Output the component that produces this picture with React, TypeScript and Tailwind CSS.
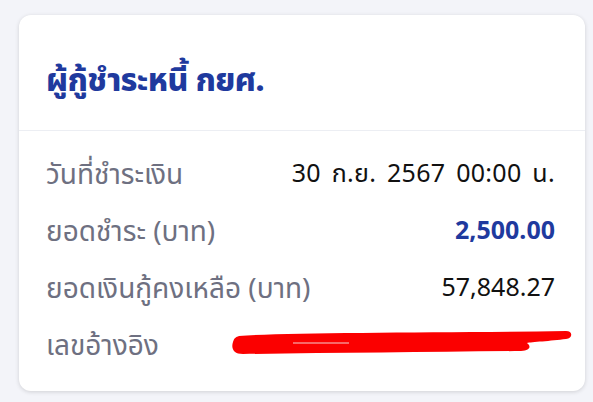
import React from "react";

const rows = [
  { label: "วันที่ชำระเงิน", value: "30 ก.ย. 2567 00:00 น.", cls: "text-[#111111] [word-spacing:4px] tracking-[0.3px]" },
  { label: "ยอดชำระ (บาท)", value: "2,500.00", cls: "text-[#1f3a9e] font-bold" },
  { label: "ยอดเงินกู้คงเหลือ (บาท)", value: "57,848.27", cls: "text-[#111111]" },
];

export default function App() {
  return (
    <div
      className="w-[593px] h-[402px] bg-[#f3f4f9] pt-[15px] pl-[19px] pr-[8px]"
      style={{ fontFamily: '"Noto Sans", "Noto Sans Thai", "Liberation Sans", sans-serif' }}
    >
      <div className="h-[376px] bg-white rounded-[12px] shadow-[0_1px_4px_rgba(0,0,0,0.15)] flex flex-col">
        <div className="h-[116px] flex items-center px-[27px] pt-[12px] border-b border-[#eceef3]">
          <h1 className="text-[32px] leading-none font-extrabold text-[#1f3a9e] tracking-[-0.6px]">ผู้กู้ชำระหนี้ กยศ.</h1>
        </div>
        <div className="flex flex-col pl-[27px] pr-[30px] pt-[13px]">
          {rows.map((r) => (
            <div key={r.label} className="h-[57px] flex items-center justify-between">
              <span className="text-[28px] leading-none text-[#6e7081]">{r.label}</span>
              <span className={"text-[25px] leading-none " + r.cls}>{r.value}</span>
            </div>
          ))}
          <div className="h-[57px] flex items-center justify-between relative">
            <span className="text-[28px] leading-none text-[#6e7081]">เลขอ้างอิง</span>
            <svg
              className="absolute left-[185px] top-[13px]"
              width="345"
              height="28"
              viewBox="0 0 345 28"
            >
              <path
                d="M8 8 C 60 4, 200 5, 335 3 C 342 3, 342 10, 335 11 C 320 13, 300 14, 296 15 C 300 18, 300 22, 290 23 C 200 24, 100 25, 12 26 C 2 26, 0 20, 2 14 C 3 10, 5 9, 8 8 Z"
                fill="#fb0000"
              />
              <path d="M62 15 L 118 15" stroke="#f3d0d0" strokeWidth="1" />
            </svg>
          </div>
        </div>
      </div>
    </div>
  );
}
